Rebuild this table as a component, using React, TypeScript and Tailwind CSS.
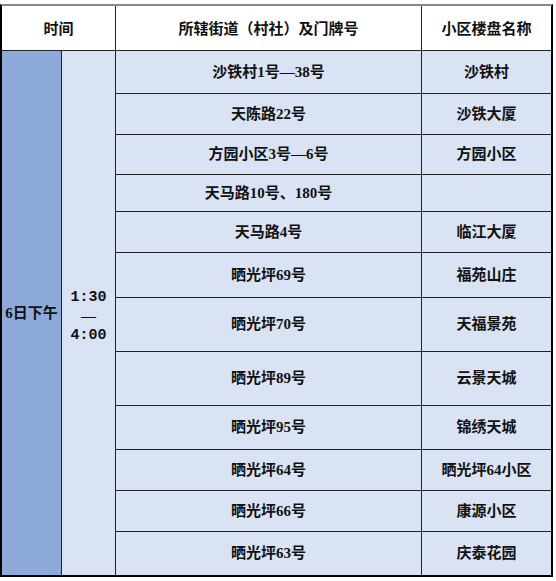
const rows: { addr: string; name: string; h: string }[] = [
  { addr: "沙铁村1号—38号", name: "沙铁村", h: "h-[43px]" },
  { addr: "天陈路22号", name: "沙铁大厦", h: "h-[41px]" },
  { addr: "方园小区3号—6号", name: "方园小区", h: "h-[40px]" },
  { addr: "天马路10号、180号", name: "", h: "h-[37px]" },
  { addr: "天马路4号", name: "临江大厦", h: "h-[41px]" },
  { addr: "晒光坪69号", name: "福苑山庄", h: "h-[45px]" },
  { addr: "晒光坪70号", name: "天福景苑", h: "h-[54px]" },
  { addr: "晒光坪89号", name: "云景天城", h: "h-[54px]" },
  { addr: "晒光坪95号", name: "锦绣天城", h: "h-[44px]" },
  { addr: "晒光坪64号", name: "晒光坪64小区", h: "h-[41px]" },
  { addr: "晒光坪66号", name: "康源小区", h: "h-[41px]" },
  { addr: "晒光坪63号", name: "庆泰花园", h: "h-[43px]" },
];

const body = { fontFamily: '"Liberation Serif", "Noto Sans CJK SC", serif' };
const head = { fontFamily: '"Noto Sans CJK SC", sans-serif' };

export default function App() {
  return (
    <div className="w-[556px] h-[581px] bg-white pt-[4px]">
      <div className="w-[553px] h-[573px] border-2 border-black border-t-[#8a8a8a] flex flex-col text-[15px] text-[#111]">
        {/* header */}
        <div className="flex h-[45px] border-b border-[#222] bg-white font-bold" style={head}>
          <div className="w-[114px] flex items-center justify-center border-r border-[#222]">时间</div>
          <div className="w-[306px] flex items-center justify-center border-r border-[#222]">所辖街道（村社）及门牌号</div>
          <div className="flex-1 flex items-center justify-center">小区楼盘名称</div>
        </div>

        <div className="flex flex-1 font-bold" style={body}>
          <div className="w-[60px] bg-[#8eaadb] border-r border-[#222] flex items-center justify-center">6日下午</div>
          <div
            className="w-[54px] bg-[#dae3f3] border-r border-[#222] flex flex-col items-center justify-center leading-[19px] pt-[6px]"
            style={{ fontFamily: '"Liberation Mono", "Noto Sans CJK SC", monospace' }}
          >
            <span>1:30</span>
            <span style={body}>—</span>
            <span>4:00</span>
          </div>
          <div className="flex-1 flex flex-col bg-[#dae3f3]">
            {rows.map((r, i) => (
              <div key={i} className={`flex ${r.h} ${i < rows.length - 1 ? "border-b border-[#222]" : ""}`}>
                <div className="w-[306px] border-r border-[#222] flex items-center justify-center">{r.addr}</div>
                <div className="flex-1 flex items-center justify-center">{r.name}</div>
              </div>
            ))}
          </div>
        </div>
      </div>
    </div>
  );
}
